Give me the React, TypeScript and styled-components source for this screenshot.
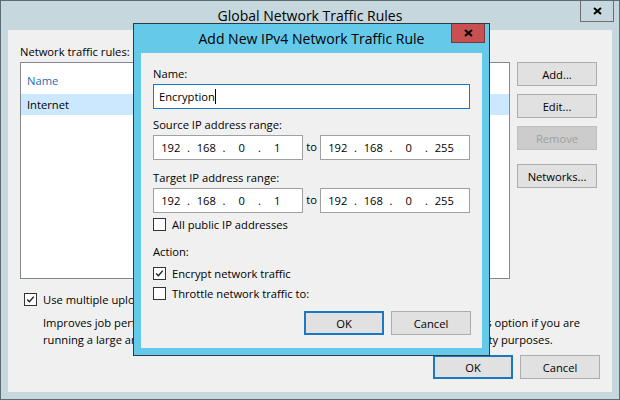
import React from 'react';
import styled, { createGlobalStyle } from 'styled-components';

const FONT = `"Open Sans", "Noto Sans", sans-serif`;

const GlobalStyle = createGlobalStyle`
  body {
    margin: 0;
    background: #ffffff;
    font-family: ${FONT};
    font-size: 11.2px;
    color: #000000;
  }
  * {
    box-sizing: border-box;
  }
`;

function CloseGlyph(): React.ReactElement {
  return (
    <svg width="9" height="8" viewBox="0 0 9 8">
      <path d="M1 1 L8 7 M8 1 L1 7" stroke="#000" strokeWidth="2" fill="none" />
    </svg>
  );
}

function Check({ checked }: { checked?: boolean }): React.ReactElement {
  return (
    <Box>
      {checked && (
        <svg width="11" height="11" viewBox="0 0 11 11">
          <path d="M2.2 5.6 L4.4 7.8 L8.8 2.6" stroke="#1e1e1e" strokeWidth="1.4" fill="none" />
        </svg>
      )}
    </Box>
  );
}

function IpField({ value }: { value: string[] }): React.ReactElement {
  return (
    <IpBox>
      {value.map((part, i) => (
        <React.Fragment key={i}>
          {i > 0 && <IpDot>.</IpDot>}
          <IpPart>{part}</IpPart>
        </React.Fragment>
      ))}
    </IpBox>
  );
}

function App(): React.ReactElement {
  const from = ['192', '168', '0', '1'];
  const to = ['192', '168', '0', '255'];
  return (
    <>
      <GlobalStyle />
      <Window>
        <TitleBar>
          <span />
          <Title>Global Network Traffic Rules</Title>
          <CloseButton>
            <CloseGlyph />
          </CloseButton>
        </TitleBar>
        <Client>
          <Label>Network traffic rules:</Label>
          <ListRow>
            <ListBox>
              <ListHeader>Name</ListHeader>
              <ListItem $selected>Internet</ListItem>
            </ListBox>
            <SideButtons>
              <Button>Add...</Button>
              <Button>Edit...</Button>
              <Button disabled>Remove</Button>
              <Button $space={14}>Networks...</Button>
            </SideButtons>
          </ListRow>
          <CheckRow $top={12} $indent={4}>
            <Check checked />
            <span>Use multiple upload streams per job</span>
          </CheckRow>
          <Description>
            <span>
              Improves job performance over high latency WAN links on low bandwidth. Disable this option if you are
            </span>
            <span>
              running a large amount of concurrent jobs or for WAN link troubleshooting connectivity purposes.
            </span>
          </Description>
          <Footer>
            <Button $default>OK</Button>
            <Button>Cancel</Button>
          </Footer>
        </Client>

        <Dialog>
          <DialogTitleBar>
            <span />
            <DialogTitle>Add New IPv4 Network Traffic Rule</DialogTitle>
            <DialogClose>
              <CloseGlyph />
            </DialogClose>
          </DialogTitleBar>
          <DialogClient>
            <Label>Name:</Label>
            <TextInput>
              Encryption
              <Caret />
            </TextInput>
            <Label $top={8}>Source IP address range:</Label>
            <RangeRow>
              <IpField value={from} />
              <To>to</To>
              <IpField value={to} />
            </RangeRow>
            <Label $top={10}>Target IP address range:</Label>
            <RangeRow>
              <IpField value={from} />
              <To>to</To>
              <IpField value={to} />
            </RangeRow>
            <CheckRow $top={3}>
              <Check />
              <span>All public IP addresses</span>
            </CheckRow>
            <Label $top={12}>Action:</Label>
            <CheckRow $top={5}>
              <Check checked />
              <span>Encrypt network traffic</span>
            </CheckRow>
            <CheckRow $top={4}>
              <Check />
              <span>Throttle network traffic to:</span>
            </CheckRow>
            <DialogFooter>
              <Button $default>OK</Button>
              <Button>Cancel</Button>
            </DialogFooter>
          </DialogClient>
        </Dialog>
      </Window>
    </>
  );
}

export default App;

const Window = styled.div`
  position: relative;
  width: 620px;
  height: 400px;
  overflow: hidden;
  border: 1px solid #5d6b72;
  background-color: #c6d7de;
  display: flex;
  flex-direction: column;
`;

const TitleBar = styled.div`
  height: 29px;
  display: grid;
  grid-template-columns: 1fr auto 1fr;
  align-items: start;
`;

const Title = styled.div`
  font-size: 14px;
  line-height: 29px;
  color: #000;
`;

const CloseButton = styled.div`
  justify-self: end;
  width: 34px;
  height: 22px;
  margin-top: -1px;
  margin-right: 5px;
  border: 1px solid #6e6e6e;
  display: flex;
  align-items: center;
  justify-content: center;
`;

const Client = styled.div`
  flex: 1;
  margin: 0 7px 7px;
  padding: 14px 12px 0 12px;
  background-color: #f0f0f0;
  display: flex;
  flex-direction: column;
  overflow: hidden;
`;

const Label = styled.div<{ $top?: number }>`
  line-height: 16px;
  margin-top: ${({ $top }) => $top ?? 0}px;
  white-space: nowrap;
`;

const ListRow = styled.div`
  margin-top: 2px;
  display: flex;
  gap: 7px;
  height: 217px;
`;

const ListBox = styled.div`
  width: 490px;
  border: 1px solid #828790;
  background-color: #ffffff;
`;

const ListHeader = styled.div`
  height: 31px;
  padding: 10px 0 0 6px;
  line-height: 16px;
  color: #1e6db8;
`;

const ListItem = styled.div<{ $selected?: boolean }>`
  height: 21px;
  line-height: 21px;
  padding-left: 6px;
  background-color: ${({ $selected }) => ($selected ? '#cce8ff' : 'transparent')};
`;

const SideButtons = styled.div`
  width: 80px;
  display: flex;
  flex-direction: column;
  gap: 8px;
`;

const Button = styled.button<{ $default?: boolean; $space?: number }>`
  width: 80px;
  height: 24px;
  margin-top: ${({ $space }) => ($space ? $space - 8 : 0)}px;
  padding: 0;
  font-family: ${FONT};
  font-size: 11.2px;
  color: #000;
  background-color: #e1e1e1;
  border: ${({ $default }) => ($default ? '2px solid #1a78c2' : '1px solid #adadad')};
  &:disabled {
    color: #a0a0a0;
    background-color: #cccccc;
    border-color: #bfbfbf;
  }
`;

const CheckRow = styled.div<{ $top?: number; $indent?: number }>`
  display: flex;
  align-items: center;
  gap: 6px;
  height: 16px;
  margin-top: ${({ $top }) => $top ?? 0}px;
  margin-left: ${({ $indent }) => $indent ?? 0}px;
  white-space: nowrap;
`;

const Box = styled.div`
  width: 13px;
  height: 13px;
  flex: none;
  border: 1px solid #333333;
  background-color: #ffffff;
  display: flex;
  align-items: center;
  justify-content: center;
`;

const Description = styled.div`
  margin-top: 7px;
  padding-left: 23px;
  display: flex;
  flex-direction: column;
  line-height: 17px;
  white-space: nowrap;
`;

const Footer = styled.div`
  margin-top: 7px;
  display: flex;
  justify-content: flex-end;
  gap: 7px;
`;

const Dialog = styled.div`
  position: absolute;
  left: 132px;
  top: 22px;
  width: 357px;
  height: 333px;
  border: 1px solid #2e3b42;
  background-color: #65c9ea;
  display: flex;
  flex-direction: column;
`;

const DialogTitleBar = styled.div`
  height: 29px;
  display: grid;
  grid-template-columns: 1fr auto 1fr;
  align-items: start;
`;

const DialogTitle = styled.div`
  font-size: 14px;
  line-height: 29px;
`;

const DialogClose = styled.div`
  justify-self: end;
  width: 34px;
  height: 20px;
  margin-top: -1px;
  margin-right: 4px;
  background-color: #c75050;
  border: 1px solid #7a3a3a;
  border-top-color: #2e3b42;
  display: flex;
  align-items: center;
  justify-content: center;
`;

const DialogClient = styled.div`
  flex: 1;
  margin: 0 7px 7px;
  padding: 13px 12px 0 12px;
  background-color: #f0f0f0;
  display: flex;
  flex-direction: column;
`;

const TextInput = styled.div`
  margin-top: 2px;
  height: 25px;
  padding-left: 5px;
  border: 1px solid #1979ca;
  background-color: #ffffff;
  display: flex;
  align-items: center;
`;

const Caret = styled.span`
  width: 1px;
  height: 15px;
  background-color: #000;
`;

const RangeRow = styled.div`
  margin-top: 2px;
  display: flex;
  align-items: center;
`;

const IpBox = styled.div`
  width: 150px;
  height: 25px;
  padding-left: 2px;
  border: 1px solid #a0a0a0;
  background-color: #ffffff;
  display: flex;
  align-items: center;
`;

const IpPart = styled.span`
  width: 29.5px;
  text-align: center;
`;

const IpDot = styled.span`
  width: 6px;
  text-align: center;
`;

const To = styled.span`
  width: 17px;
  text-align: center;
  margin-top: -3px;
`;

const DialogFooter = styled.div`
  margin-top: 10px;
  margin-right: -1px;
  display: flex;
  justify-content: flex-end;
  gap: 7px;
`;
